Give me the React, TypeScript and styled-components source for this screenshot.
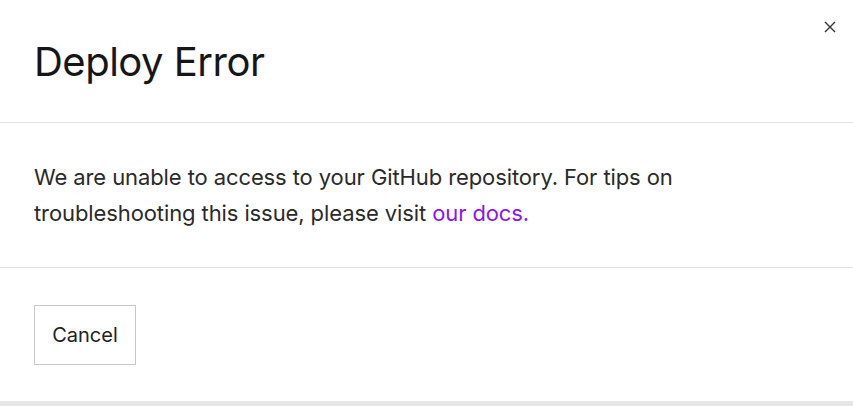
import { createGlobalStyle } from 'styled-components';
import styled from 'styled-components';

const GlobalStyle = createGlobalStyle`
  html, body {
    margin: 0;
    padding: 0;
    background: #e6e6e6;
  }
  body {
    font-family: Inter, 'Noto Sans', sans-serif;
    color: #1a1a1a;
  }
`;

const Dialog = styled.div`
  position: relative;
  background: #ffffff;
  width: 100%;
  height: 401px;
  display: flex;
  flex-direction: column;
`;

const Header = styled.header`
  height: 123px;
  box-sizing: border-box;
  padding: 0 34px;
  display: flex;
  align-items: center;
  border-bottom: 1px solid #e2e2e2;
`;

const Title = styled.h1`
  margin: 0;
  font-size: 40px;
  font-weight: 400;
  letter-spacing: -0.5px;
  color: #161616;
`;

const CloseButton = styled.button`
  position: absolute;
  top: 18px;
  right: 14px;
  width: 18px;
  height: 18px;
  padding: 0;
  border: none;
  background: none;
  display: flex;
  align-items: center;
  justify-content: center;
  cursor: pointer;
`;

const Body = styled.section`
  height: 145px;
  box-sizing: border-box;
  padding: 0 34px;
  display: flex;
  align-items: center;
  border-bottom: 1px solid #e2e2e2;
`;

const Message = styled.p`
  margin: 0;
  font-size: 22px;
  line-height: 36px;
  letter-spacing: -0.1px;
  color: #2a2a2a;
  max-width: 680px;
`;

const DocsLink = styled.a`
  color: #8c14f0;
  text-decoration: none;
`;

const Footer = styled.footer`
  flex: 1;
  padding: 0 34px;
  display: flex;
  align-items: center;
`;

const Button = styled.button`
  width: 102px;
  height: 60px;
  background: #fff;
  border: 1px solid #c8c8c8;
  font-family: Inter, 'Noto Sans', sans-serif;
  font-size: 20px;
  color: #222;
  cursor: pointer;
`;

export default function App() {
  return (
    <>
      <GlobalStyle />
      <Dialog>
        <Header>
          <Title>Deploy Error</Title>
        </Header>
        <CloseButton aria-label='Close'>
          <svg width='12' height='12' viewBox='0 0 12 12'>
            <path d='M1 1L11 11M11 1L1 11' stroke='#333' strokeWidth='1.4' />
          </svg>
        </CloseButton>
        <Body>
          <Message>
            We are unable to access to your GitHub repository. For tips on troubleshooting this issue,
            please visit <DocsLink href='#'>our docs.</DocsLink>
          </Message>
        </Body>
        <Footer>
          <Button>Cancel</Button>
        </Footer>
      </Dialog>
    </>
  );
}
